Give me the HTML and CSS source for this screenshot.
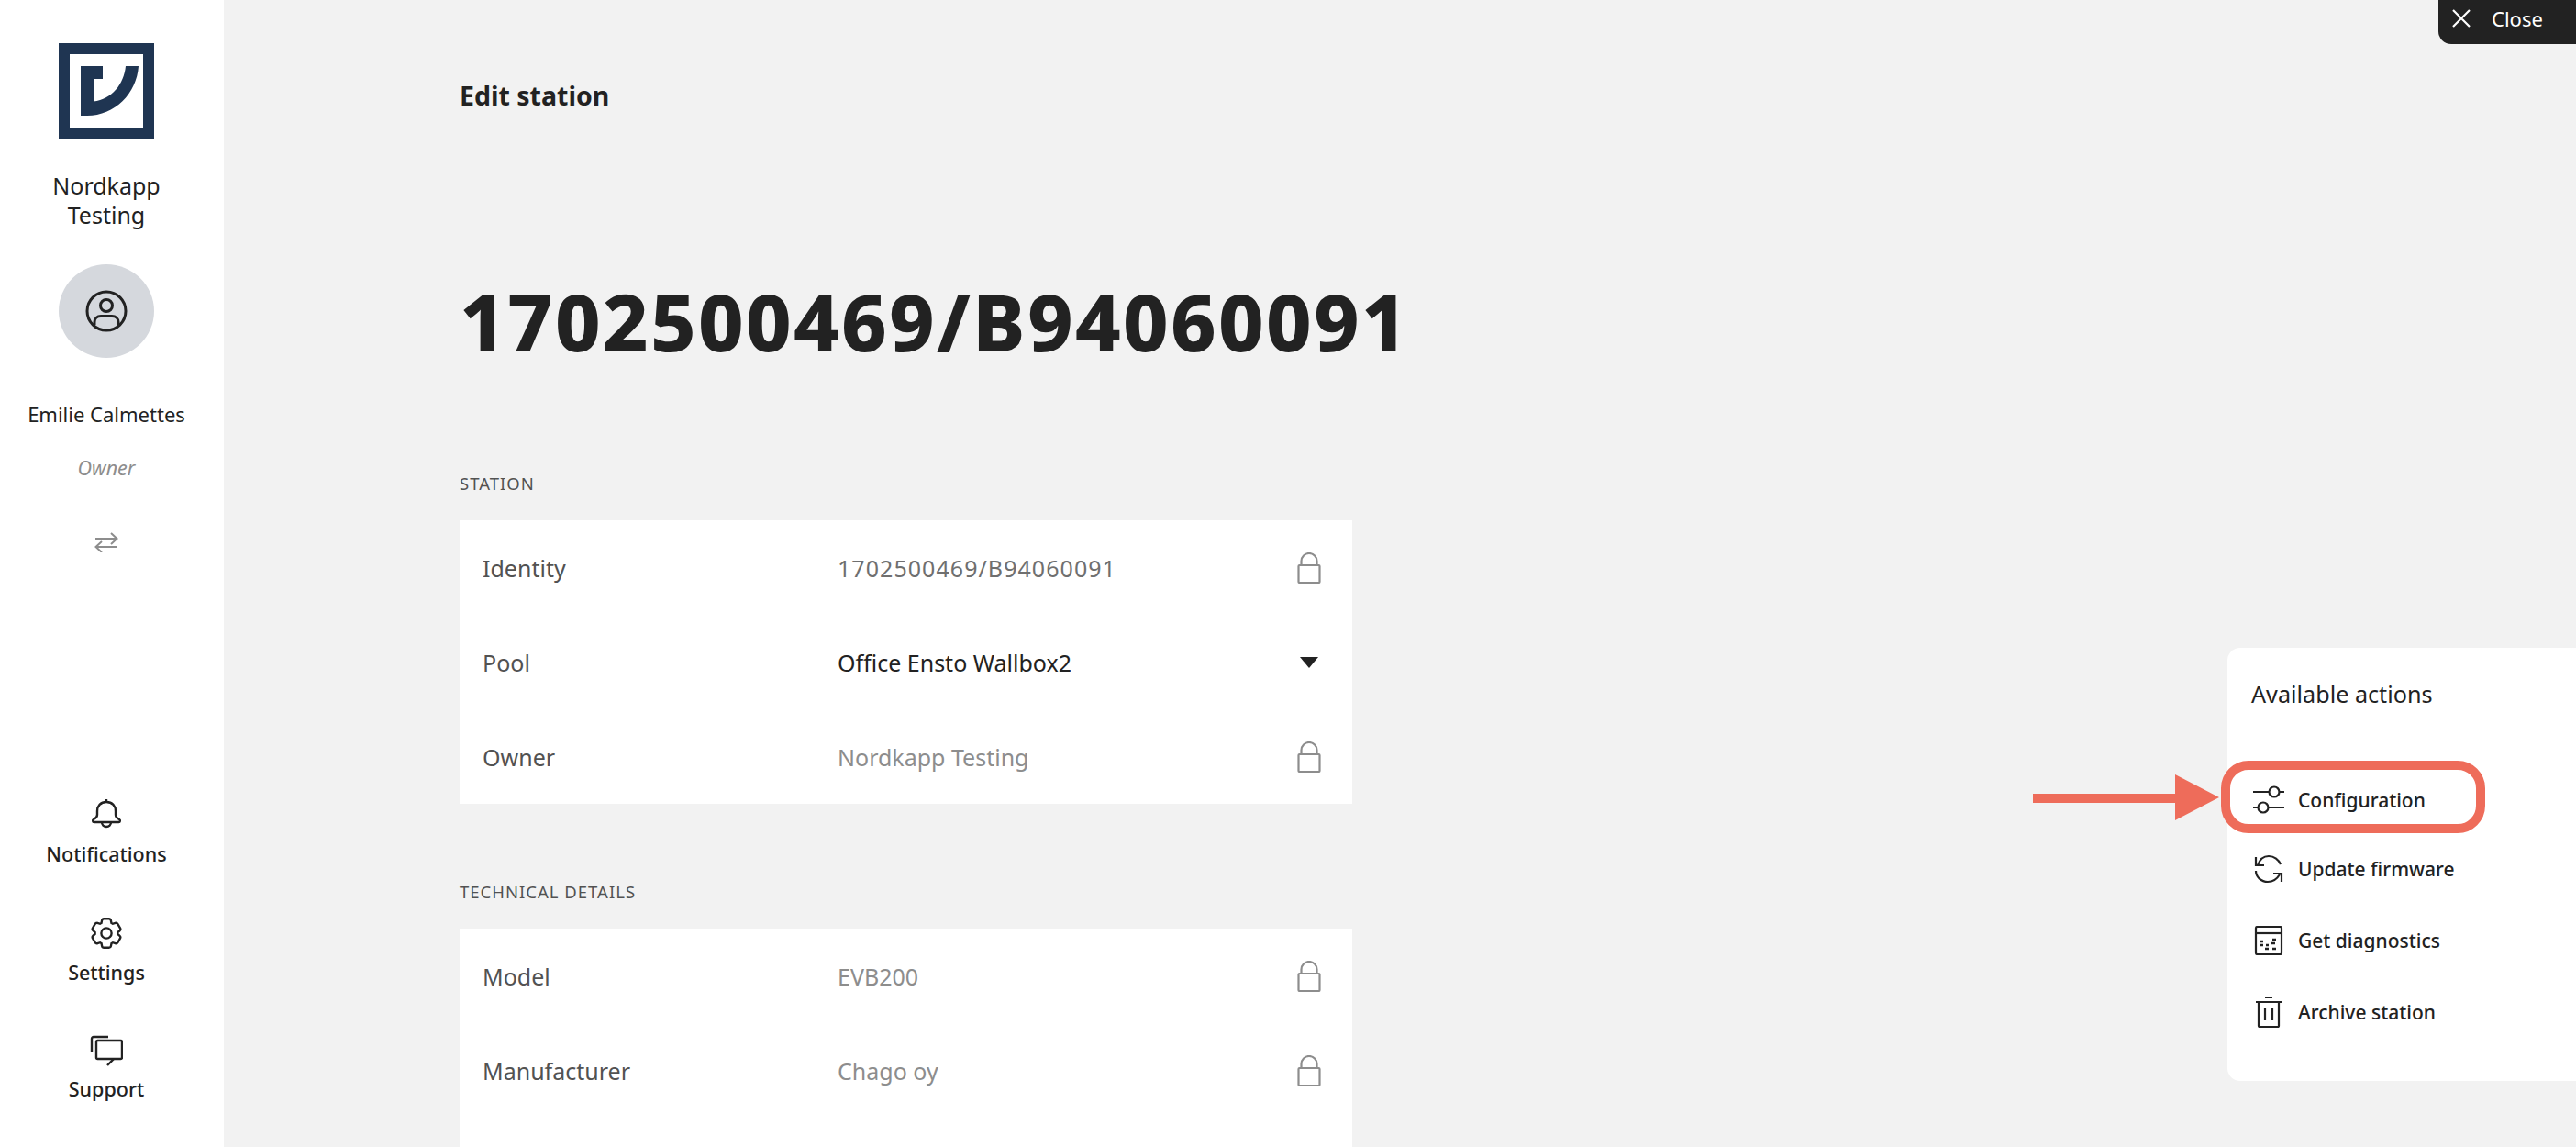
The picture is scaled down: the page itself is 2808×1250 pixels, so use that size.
FILE: index.html
```html
<!DOCTYPE html>
<html lang="en">
<head>
  <meta charset="UTF-8" />
  <title>Edit station</title>
  <link rel="stylesheet" href="styles.css">
</head>
<body>

  <aside class="sidebar">
    <svg class="logo" viewBox="64 47 104 104">
      <rect x="70" y="53" width="92" height="92" fill="none" stroke="#1f3552" stroke-width="12"/>
      <path d="M88 72H112V86H102V110.500C122 108 135 92 137 72H151C149 102 125 126 95 126H88Z" fill="#1f3552"/>
    </svg>
    <div class="org-name">Nordkapp<br>Testing</div>
    <div class="avatar">
      <svg width="46" height="46" viewBox="0 0 46 46" fill="none" stroke="#222" stroke-width="3">
        <circle cx="23" cy="23" r="21"/>
        <circle cx="23" cy="17" r="6.500"/>
        <path d="M10 38v-3c0-4 3-6.500 7-6.500h12c4 0 7 2.500 7 6.500v3"/>
      </svg>
    </div>
    <div class="user-name">Emilie Calmettes</div>
    <div class="user-role">Owner</div>
    <svg class="swap-icon" width="26" height="22" viewBox="0 0 26 22" fill="none" stroke="#8d8d8d" stroke-width="2">
      <path d="M1 7H24M18 1l6.500 6L18 13"/>
      <path d="M25 16H2M8 10l-6.500 6L8 22"/>
    </svg>

    <nav class="side-nav">
      <div class="side-item">
        <svg width="34" height="36" viewBox="0 0 34 36" fill="none" stroke="#222" stroke-width="2.400">
          <path d="M17 1v3"/>
          <path d="M17 4c-6.500 0-10 4.500-10 10v4c0 2-1 3.500-4 5-1.500.8-1 3 .5 3h27c1.500 0 2-2.200.5-3-3-1.500-4-3-4-5v-4c0-5.500-3.500-10-10-10z"/>
          <path d="M12 26a5 5 0 0 0 10 0"/>
        </svg>
        <span>Notifications</span>
      </div>
      <div class="side-item">
        <svg width="36" height="36" viewBox="0 0 32 32" fill="none" stroke="#222" stroke-width="2.100">
          <path d="M27 16.760c0-.25 0-.5 0-.76s0-.51 0-.77l1.920-1.680A2 2 0 0 0 29.300 11L26.940 7a2 2 0 0 0-1.730-1 2 2 0 0 0-.64.1l-2.430.82a11.350 11.350 0 0 0-1.310-.75l-.51-2.520a2 2 0 0 0-2-1.610H13.640a2 2 0 0 0-2 1.610l-.51 2.520a11.480 11.480 0 0 0-1.320.75L7.430 6.060A2 2 0 0 0 6.790 6 2 2 0 0 0 5.060 7L2.700 11a2 2 0 0 0 .41 2.510L5 15.240c0 .25 0 .5 0 .76s0 .51 0 .77l-1.890 1.680A2 2 0 0 0 2.700 21l2.360 4a2 2 0 0 0 1.730 1 2 2 0 0 0 .64-.1l2.430-.82a11.350 11.350 0 0 0 1.310.75l.51 2.520a2 2 0 0 0 2 1.610h4.720a2 2 0 0 0 2-1.610l.51-2.520a11.480 11.480 0 0 0 1.320-.75l2.420.82a2 2 0 0 0 .64.1 2 2 0 0 0 1.730-1L29.300 21a2 2 0 0 0-.41-2.510z"/>
          <circle cx="16" cy="16" r="5"/>
        </svg>
        <span>Settings</span>
      </div>
      <div class="side-item">
        <svg width="36" height="34" viewBox="0 0 36 34" fill="none" stroke="#222" stroke-width="2.400">
          <path d="M20 2H4a2 2 0 0 0-2 2V18"/>
          <rect x="7" y="6" width="28" height="20" rx="1.500"/>
          <path d="M26 26l-7 7"/>
        </svg>
        <span>Support</span>
      </div>
    </nav>
  </aside>

  <main class="content">
    <div class="page-title">Edit station</div>
    <h1 class="station-id">1702500469/B94060091</h1>

    <section class="form-section">
      <div class="section-label">STATION</div>
      <div class="card">
        <div class="field">
          <span class="field-label">Identity</span>
          <span class="field-value locked">1702500469/B94060091</span>
          <svg class="lock" viewBox="0 0 26 34"><path d="M4.500 14V9.500a8.500 8.500 0 0 1 17 0V14"/><rect x="1.500" y="14" width="23" height="19" rx="1"/></svg>
        </div>
        <div class="field">
          <span class="field-label">Pool</span>
          <span class="field-value">Office Ensto Wallbox2</span>
          <svg class="caret" viewBox="0 0 20 12"><path d="M0 0H20L10 12Z"/></svg>
        </div>
        <div class="field">
          <span class="field-label">Owner</span>
          <span class="field-value muted">Nordkapp Testing</span>
          <svg class="lock" viewBox="0 0 26 34"><path d="M4.500 14V9.500a8.500 8.500 0 0 1 17 0V14"/><rect x="1.500" y="14" width="23" height="19" rx="1"/></svg>
        </div>
      </div>
    </section>

    <section class="form-section">
      <div class="section-label">TECHNICAL DETAILS</div>
      <div class="card">
        <div class="field">
          <span class="field-label">Model</span>
          <span class="field-value muted">EVB200</span>
          <svg class="lock" viewBox="0 0 26 34"><path d="M4.500 14V9.500a8.500 8.500 0 0 1 17 0V14"/><rect x="1.500" y="14" width="23" height="19" rx="1"/></svg>
        </div>
        <div class="field">
          <span class="field-label">Manufacturer</span>
          <span class="field-value muted">Chago oy</span>
          <svg class="lock" viewBox="0 0 26 34"><path d="M4.500 14V9.500a8.500 8.500 0 0 1 17 0V14"/><rect x="1.500" y="14" width="23" height="19" rx="1"/></svg>
        </div>
        <div class="field"></div>
      </div>
    </section>
  </main>

  <div class="close-btn">
    <svg width="20" height="20" viewBox="0 0 20 20" stroke="#fff" stroke-width="2.200"><path d="M1 1L19 19M19 1L1 19"/></svg>
    <span>Close</span>
  </div>

  <div class="actions-panel">
    <svg class="arrow" width="203" height="50" viewBox="0 0 203 50" fill="#ee6c5a">
      <rect x="0" y="21" width="156" height="10"/>
      <path d="M155 0L203 25L155 50Z"/>
    </svg>
    <div class="actions-title">Available actions</div>
    <div class="action active">
      <svg width="34" height="32" viewBox="0 0 34 32" fill="none" stroke="#222" stroke-width="2.200">
        <path d="M0 7H17M29 7H34"/><circle cx="23" cy="7" r="5.500"/>
        <path d="M0 24H5M17 24H34"/><circle cx="11" cy="24" r="5.500"/>
      </svg>
      <span>Configuration</span>
    </div>
    <div class="action">
      <svg width="34" height="32" viewBox="0 0 34 32" fill="none" stroke="#222" stroke-width="2.200">
        <path d="M5 12C7 6 11 2 17 2c6 0 11 4 13 9M3 3v9h9"/>
        <path d="M3 18c0 7 6 12 13 12 6 0 10-3 13-8M31 30v-9h-9"/>
      </svg>
      <span>Update firmware</span>
    </div>
    <div class="action">
      <svg width="34" height="32" viewBox="0 0 34 32" fill="none" stroke="#222" stroke-width="2.200">
        <rect x="3" y="1" width="28" height="30" rx="1.500"/>
        <path d="M3 8H31"/>
        <path d="M7 17h4M14 21h3M21 15h4M7 21h4M13 25h4M21 25h4M20 19h4" stroke-width="2.400"/>
      </svg>
      <span>Get diagnostics</span>
    </div>
    <div class="action">
      <svg width="34" height="34" viewBox="0 0 34 34" fill="none" stroke="#222" stroke-width="2.200">
        <path d="M13 1h8M3 6H31"/>
        <rect x="6" y="6" width="22" height="27" rx="1"/>
        <path d="M13 13v13M21 13v13"/>
      </svg>
      <span>Archive station</span>
    </div>
  </div>

</body>
</html>
```

FILE: styles.css
```css
* {
  margin: 0;
  padding: 0;
  box-sizing: border-box;
  font-family: "Noto Sans", Roboto, Arial, sans-serif;
}

body {
  background-color: #F2F2F2;
  color: #222222;
  display: flex;
  height: 100vh;
  overflow: hidden;
}

.sidebar {
  background-color: #FFFFFF;
  width: 244px;
  flex-shrink: 0;
  display: flex;
  flex-direction: column;
  align-items: center;
  padding: 47px 12px 0 0;
}

.logo {
  width: 104px;
  height: 104px;
}

.org-name {
  margin-top: 35px;
  font-size: 25px;
  line-height: 32px;
  text-align: center;
}

.avatar {
  margin-top: 38px;
  width: 104px;
  height: 102px;
  border-radius: 50%;
  background-color: #D5D8DD;
  display: flex;
  align-items: center;
  justify-content: center;
}

.user-name {
  margin-top: 46px;
  font-size: 22px;
  line-height: 30px;
  white-space: nowrap;
}

.user-role {
  margin-top: 29px;
  font-size: 21.500px;
  line-height: 30px;
  font-style: italic;
  color: #8D8D8D;
}

.swap-icon {
  margin-top: 55px;
}

.side-nav {
  margin-top: auto;
  padding-bottom: 48px;
  display: flex;
  flex-direction: column;
  gap: 53px;
}

.side-item {
  display: flex;
  flex-direction: column;
  align-items: center;
  gap: 10px;
  font-size: 21.500px;
  font-weight: 500;
  line-height: 30px;
}

.content {
  flex: 1;
  padding: 84px 0 0 257px;
}

.page-title {
  font-size: 28.500px;
  font-weight: 700;
  line-height: 40px;
}

.station-id {
  margin-top: 171px;
  font-size: 86px;
  font-weight: 800;
  letter-spacing: 2.300px;
  line-height: 110px;
  margin-bottom: 110px;
}

.form-section {
  width: 973px;
  margin-bottom: 84px;
}

.section-label {
  font-size: 18.500px;
  line-height: 24px;
  letter-spacing: 1px;
  color: #525252;
  margin-bottom: 28px;
}

.card {
  background-color: #FFFFFF;
}

.field {
  height: 103px;
  padding: 0 31px 0 25px;
  display: grid;
  grid-template-columns: 387px 1fr 32px;
  align-items: center;
  font-size: 25px;
}

.field-label {
  color: #525252;
}

.field-value.locked {
  color: #6F6F6F;
  letter-spacing: 1.050px;
}

.field-value.muted {
  color: #8D8D8D;
}

.lock {
  width: 26px;
  height: 34px;
  fill: none;
  stroke: #8D8D8D;
  stroke-width: 2.200px;
  justify-self: center;
}

.caret {
  width: 20px;
  height: 12px;
  fill: #222222;
  justify-self: center;
}

.close-btn {
  position: absolute;
  top: 0;
  right: 0;
  width: 150px;
  height: 48px;
  padding: 0 0 8px 15px;
  background-color: #222222;
  border-bottom-left-radius: 14px;
  color: #FFFFFF;
  display: flex;
  align-items: center;
  gap: 23px;
  font-size: 22px;
}

.actions-panel {
  position: absolute;
  top: 706px;
  right: 0;
  width: 380px;
  height: 472px;
  padding-top: 30px;
  background-color: #FFFFFF;
  border-radius: 14px 0 0 14px;
}

.arrow {
  position: absolute;
  left: -212px;
  top: 138px;
}

.actions-title {
  padding-left: 26px;
  font-size: 25.200px;
  line-height: 40px;
  margin-bottom: 53px;
}

.action {
  height: 78px;
  padding-left: 28px;
  display: flex;
  align-items: center;
  gap: 15px;
  font-size: 21px;
  font-weight: 500;
}

.action.active {
  margin-left: -7px;
  width: 288px;
  height: 79px;
  padding: 6px 0 0 25px;
  border: 10px solid #EE6C5A;
  border-radius: 30px;
}
```
